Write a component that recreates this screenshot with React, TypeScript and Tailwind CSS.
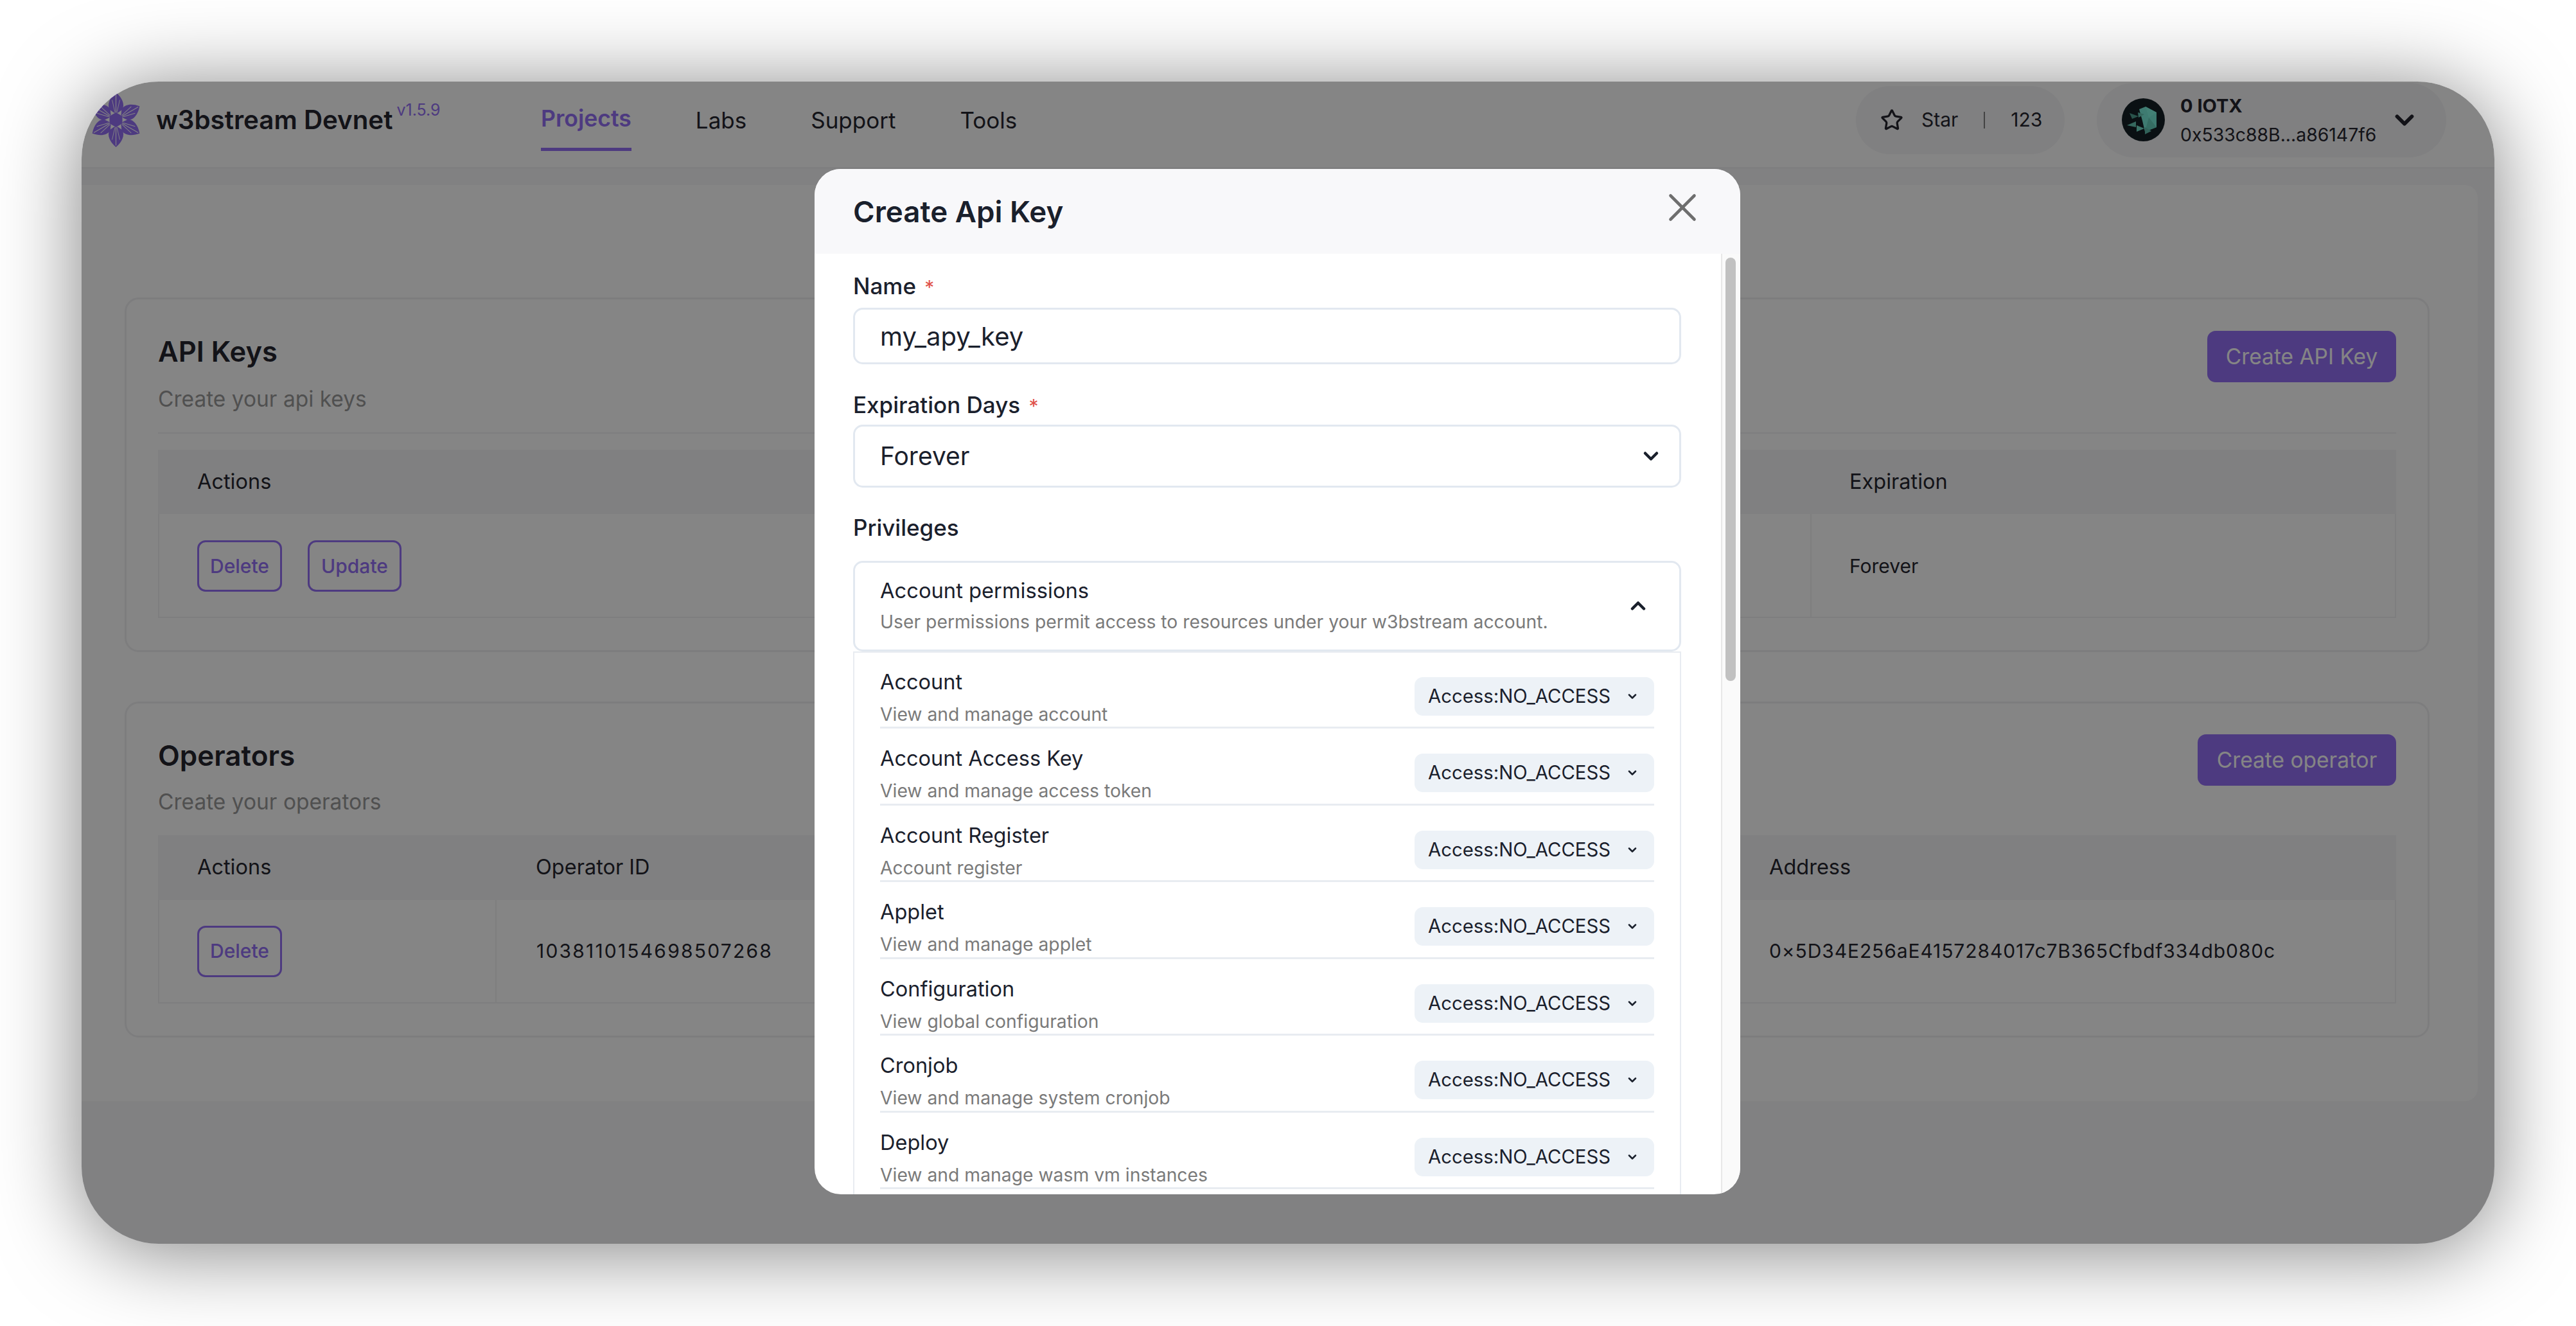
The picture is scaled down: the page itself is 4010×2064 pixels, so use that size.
import { ChevronDown, ChevronUp, Star, X } from 'lucide-react'

const permissions = [
  ['Account', 'View and manage account'],
  ['Account Access Key', 'View and manage access token'],
  ['Account Register', 'Account register'],
  ['Applet', 'View and manage applet'],
  ['Configuration', 'View global configuration'],
  ['Cronjob', 'View and manage system cronjob'],
  ['Deploy', 'View and manage wasm vm instances'],
]

function Logo() {
  return (
    <svg width="75" height="85" viewBox="-37.5 -42.5 75 85">
      {[0, 60, 120, 180, 240, 300].map((angle) => (
        <g key={angle} transform={`rotate(${angle})`}>
          <path d="M0 -42.5 C10 -34 14 -24 10 -16 L3 -11 L-3 -11 L-10 -16 C-14 -24 -10 -34 0 -42.5 Z" fill="#946ff6" />
          <path d="M0 -40 L0 -11" stroke="#fff" strokeWidth="1.1" />
          <path d="M1.5 -12 L6 -31 M-1.5 -12 L-6 -31" stroke="#fff" strokeWidth="0.9" />
        </g>
      ))}
      <polygon points="0,-11.5 10,-5.75 10,5.75 0,11.5 -10,5.75 -10,-5.75" fill="#946ff6" />
    </svg>
  )
}

function Avatar() {
  return (
    <svg width="67" height="67" viewBox="0 0 67 67" className="shrink-0">
      <circle cx="33.5" cy="33.5" r="33.5" fill="#151f26" />
      <polygon points="27,17 37,13 54,22 54,45 36,52 32,35" fill="#78ecd8" />
      <polygon points="37,13 54,22 42,30" fill="#7ff5e0" />
      <polygon points="42,30 54,45 36,52" fill="#66d2be" />
      <polygon points="12,23 26,28 16,32" fill="#4f9f90" />
      <polygon points="25,22 35,25 26,30" fill="#62c4b2" />
      <polygon points="8,42 22,36 22,45" fill="#66c8b5" />
      <polygon points="23,42 35,47 23,52" fill="#72dcc8" />
      <polygon points="36,45 46,51 36,56" fill="#5fbcab" />
    </svg>
  )
}

function OutlineButton({ label, width }: { label: string; width: string }) {
  return (
    <button className={`${width} h-[80px] box-border border-[3px] border-[#946ff6] rounded-[13px] text-[30px] font-medium text-[#946ff6] flex items-center justify-center`}>
      {label}
    </button>
  )
}

export default function App() {
  return (
    <div className="w-[4010px] h-[2064px] bg-white pt-[127px] pl-[127px] overflow-hidden font-[Inter,sans-serif]">
      <div className="relative w-[3756px] h-[1809px] rounded-[120px] overflow-hidden bg-[#f8f8fa] shadow-[0_10px_130px_rgba(0,0,0,0.5)]">
        <header className="flex items-center h-[136px] box-border pb-[14px] bg-white border-b-[3px] border-[#f3f3f5] pl-[16px] pr-[75px]">
          <Logo />
          <div className="flex items-start ml-[25px] w-[599px]">
            <span className="text-[40.3px] leading-[50px] font-semibold text-[#26262f]">w3bstream Devnet</span>
            <span className="text-[25px] leading-[30px] text-[#946ff6] ml-[6px] -mt-[6px]">v1.5.9</span>
          </div>
          <nav className="flex gap-[100px] text-[35px] leading-[44px] text-[#26262f]">
            <a className="relative text-[35.6px] font-semibold text-[#946ff6] -mt-[2px]">
              Projects
              <span className="absolute left-0 right-0 top-[67px] h-[5px] bg-[#946ff6]" />
            </a>
            <a>Labs</a>
            <a>Support</a>
            <a>Tools</a>
          </nav>
          <div className="ml-auto flex items-center gap-[50px] text-[#26262f]">
            <div className="flex items-center w-[325px] h-[106px] rounded-[53px] bg-[#f6f6f8] pl-[38px] text-[30px]">
              <Star size={36} strokeWidth={2.2} />
              <span className="ml-[28px]">Star</span>
              <span className="ml-[40px] w-[2px] h-[26px] bg-[#808080]" />
              <span className="ml-[40px]">123</span>
            </div>
            <div className="flex items-center w-[544px] h-[116px] rounded-[58px] bg-[#f6f6f8] pl-[39px]">
              <Avatar />
              <div className="ml-[24px] w-[306px] flex flex-col text-[28.4px] leading-[45px] whitespace-nowrap">
                <span className="font-bold text-[29px]">0 IOTX</span>
                <span>0x533c88B...a86147f6</span>
              </div>
              <ChevronDown size={46} strokeWidth={3} className="ml-[20px]" />
            </div>
          </div>
        </header>

        <main className="pt-[25px]">
          <div className="w-[3730px] h-[1426px] box-border rounded-r-[20px] bg-white pl-[67px] pr-[75px] pt-[175px]">
            <section className="h-[552px] box-border border-[3px] border-[#f0f0f2] rounded-[22px] px-[49px]">
              <div className="flex justify-between">
                <div className="pt-[51px]">
                  <h2 className="text-[43.5px] leading-[60px] font-semibold text-[#26262f]">API Keys</h2>
                  <p className="mt-[19px] text-[33.5px] leading-[50px] text-[#9a9a9a]">Create your api keys</p>
                </div>
                <button className="mt-[49px] w-[294px] h-[80px] rounded-[13px] bg-[#946ff6] text-white text-[33.5px]">Create API Key</button>
              </div>
              <div className="mt-[27px] h-[2px] bg-[#f2f2f4]" />
              <div className="mt-[25px] flex items-center h-[100px] bg-[#f5f5f7] text-[32.5px] text-[#26262f]">
                <span className="ml-[61px]">Actions</span>
                <span className="ml-auto w-[912px] pl-[61px] box-border">Expiration</span>
              </div>
              <div className="flex items-center h-[162px] box-border border-x-[2px] border-b-[2px] border-[#f2f2f4] text-[30px] text-[#26262f]">
                <div className="ml-[59px] mt-[2px] flex gap-[40px]">
                  <OutlineButton label="Delete" width="w-[132px]" />
                  <OutlineButton label="Update" width="w-[146px]" />
                </div>
                <div className="ml-auto w-[910px] h-full flex items-center pl-[59px] pt-[2px] box-border border-l-[2px] border-[#f2f2f4]">Forever</div>
              </div>
            </section>

            <section className="mt-[77px] h-[523px] box-border border-[3px] border-[#f0f0f2] rounded-[22px] px-[49px]">
              <div className="flex justify-between">
                <div className="pt-[51px]">
                  <h2 className="text-[44px] leading-[60px] font-semibold text-[#26262f]">Operators</h2>
                  <p className="mt-[17px] text-[33.5px] leading-[50px] text-[#9a9a9a]">Create your operators</p>
                </div>
                <button className="mt-[48px] w-[309px] h-[80px] rounded-[13px] bg-[#946ff6] text-white text-[33.5px]">Create operator</button>
              </div>
              <div className="mt-[27px] flex items-center h-[101px] bg-[#f5f5f7] text-[32.5px] text-[#26262f]">
                <span className="ml-[61px] w-[527px]">Actions</span>
                <span>Operator ID</span>
                <span className="ml-auto w-[1037px] pl-[61px] box-border">Address</span>
              </div>
              <div className="flex items-center h-[161px] box-border border-x-[2px] border-b-[2px] border-[#f2f2f4] text-[30px] text-[#26262f]">
                <div className="w-[525px] h-full flex items-center pl-[59px] box-border border-r-[2px] border-[#f2f2f4]">
                  <OutlineButton label="Delete" width="w-[132px]" />
                </div>
                <span className="ml-[62px] tracking-[2.2px]">1038110154698507268</span>
                <span className="ml-auto w-[1035px] pl-[61px] box-border tracking-[0.9px]">0×5D34E256aE4157284017c7B365Cfbdf334db080c</span>
              </div>
            </section>
          </div>
        </main>

        <div className="absolute inset-0 bg-black/48" />

        <div className="absolute left-[1141px] top-[136px] w-[1441px] h-[1596px] rounded-[41px] overflow-hidden bg-white flex flex-col">
          <div className="flex justify-between h-[132px] shrink-0 bg-[#f8f8fa] pl-[60px] pr-[53px]">
            <h1 className="mt-[37px] text-[45.7px] leading-[60px] font-semibold text-[#1a202c]">Create Api Key</h1>
            <X size={74} strokeWidth={1.5} className="text-[#6e6e6e] mt-[23px]" />
          </div>
          <div className="flex flex-1 min-h-0">
            <div className="flex-1 pl-[60px] pr-[62px] overflow-hidden">
              <label className="block mt-[28px] h-[44px] text-[35px] leading-[44px] font-medium text-[#1a202c]">
                Name <span className="ml-[4px] text-[30px] font-normal text-[#e0524a]">*</span>
              </label>
              <div className="mt-[12px] h-[88px] box-border border-[3px] border-[#e2e8f0] rounded-[15px] flex items-center pl-[39px] pt-[2px] text-[40px] text-[#1a202c]">my_apy_key</div>
              <label className="block mt-[41px] h-[44px] text-[35px] leading-[44px] font-medium text-[#1a202c]">
                Expiration Days <span className="ml-[4px] text-[30px] font-normal text-[#e0524a]">*</span>
              </label>
              <div className="mt-[9px] h-[98px] box-border border-[3px] border-[#e2e8f0] rounded-[15px] flex items-center justify-between pl-[39px] pr-[26px] text-[39px] text-[#1a202c]">
                Forever
                <ChevronDown size={36} strokeWidth={3} />
              </div>
              <label className="block mt-[40px] h-[44px] text-[35px] leading-[44px] font-medium text-[#1a202c]">Privileges</label>
              <div className="mt-[30px] h-[141px] box-border border-[3px] border-[#e2e8f0] rounded-[15px] flex items-center justify-between pl-[39px] pr-[46px]">
                <div>
                  <div className="text-[32.7px] leading-[44px] text-[#1a202c]">Account permissions</div>
                  <div className="mt-[5px] text-[28.3px] leading-[44px] text-[#7a7a7a]">User permissions permit access to resources under your w3bstream account.</div>
                </div>
                <ChevronUp size={36} strokeWidth={3} className="text-[#1a202c] -mt-[2px]" />
              </div>
              <div className="h-[900px] box-border border-x-[2px] border-t-[2px] border-[#e8ecf1] px-[40px]">
                {permissions.map(([title, description]) => (
                  <div key={title} className="h-[119.5px] box-border flex items-center justify-between pt-[22px] border-b-[3px] border-[#e8ecf1] first:h-[118px] first:pt-[20px]">
                    <div className="mt-[4px]">
                      <div className="text-[32.5px] leading-[44px] text-[#1a202c]">{title}</div>
                      <div className="mt-[8px] text-[28.3px] leading-[40px] text-[#7a7a7a]">{description}</div>
                    </div>
                    <div className="w-[373px] h-[60px] rounded-[13px] bg-[#edf2f7] flex items-center justify-between pl-[21px] pr-[24px] text-[29.3px] text-[#1a202c]">
                      Access:NO_ACCESS
                      <ChevronDown size={20} strokeWidth={3} />
                    </div>
                  </div>
                ))}
              </div>
            </div>
            <div className="w-[30px] shrink-0 box-border border-l-[2px] border-[#e8e8e8] bg-[#fafafa] pt-[6px] pl-[5px]">
              <div className="w-[16px] h-[659px] rounded-[8px] bg-[#c1c1c1]" />
            </div>
          </div>
        </div>
      </div>
    </div>
  )
}
